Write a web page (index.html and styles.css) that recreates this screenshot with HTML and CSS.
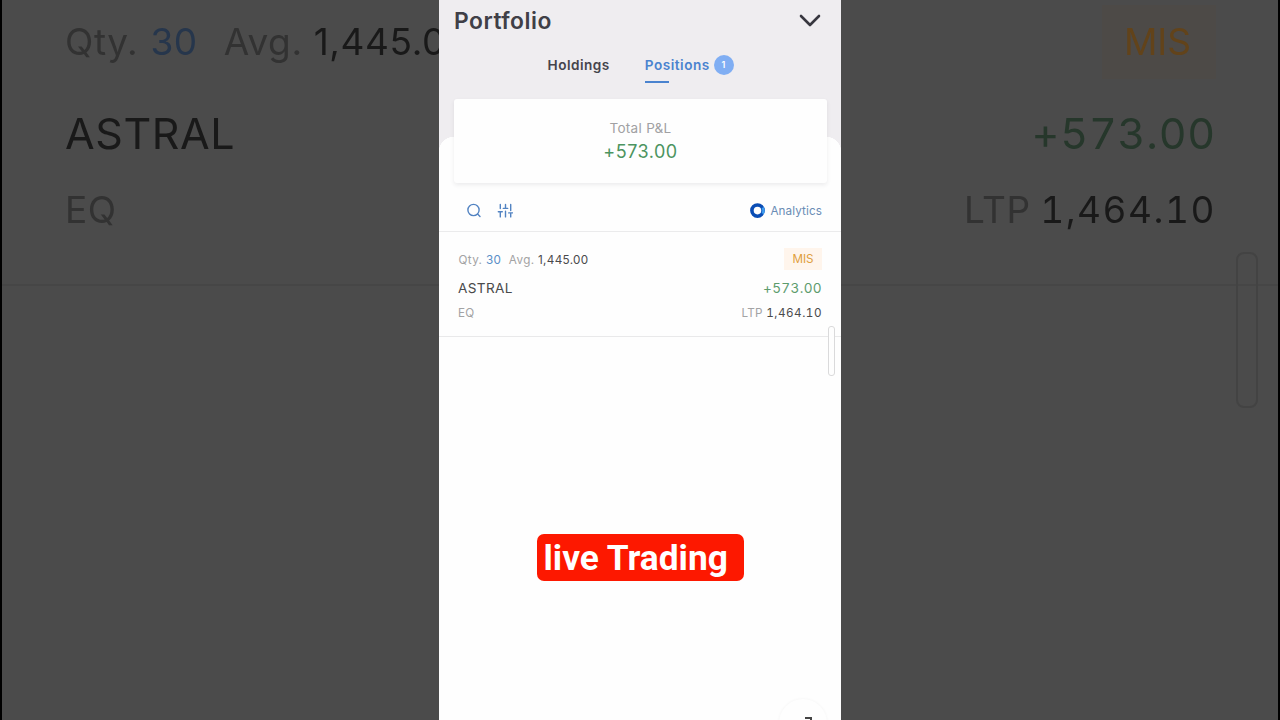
FILE: index.html
```html
<!DOCTYPE html>
<html lang="en">

<head>
  <meta charset="utf-8">
  <title>Portfolio</title>
  <link rel="stylesheet" href="styles.css">
</head>

<body>
  <div class="stage">
    <div class="side side-left">
      <div class="line qty"><span class="muted">Qty.</span> <span class="blue">30</span> <span class="muted avg">Avg.</span> <span class="dark">1,445.00</span></div>
      <div class="line symbol">ASTRAL</div>
      <div class="line exchange muted">EQ</div>
    </div>

    <div class="phone">
      <div class="header">
        <div class="title">
          <h1>Portfolio</h1>
          <svg class="chevron" width="22" height="14" viewBox="0 0 22 14"><path d="M2 2 L11 11 L20 2" /></svg>
        </div>
        <div class="tabs">
          <div class="tab">Holdings</div>
          <div class="tab active">Positions <span class="count">1</span></div>
        </div>
      </div>

      <div class="sheet">
        <div class="total">
          <div class="total-label">Total P&amp;L</div>
          <div class="total-value">+573.00</div>
        </div>

        <div class="tools">
          <svg class="icon search" width="16" height="16" viewBox="0 0 16 16"><circle cx="7.5" cy="7" r="5.6" /><path d="M11.6 11.1 L14 13.5" /></svg>
          <svg class="icon filter" width="16" height="16" viewBox="0 0 16 16"><path d="M3.3 1.5V5.5 M3.3 8.9V13.9 M1.3 8.7H5.3 M8.5 1.5V5.2 M8.5 8.2V13.9 M6.3 5.4H10.7 M13.7 1.5V7.5 M13.7 10.2V13.9 M11.7 9.9H15.7" /></svg>
          <svg class="ring" width="16" height="16" viewBox="0 0 16 16"><circle cx="8.5" cy="7.6" r="5.6" stroke="#0a4db5" /><path d="M13.6 4.6 A6 6 0 0 1 13.6 10.6" stroke="#3d9df0" stroke-width="2.4" /></svg>
          <span class="analytics">Analytics</span>
        </div>

        <div class="position">
          <div class="row row-top">
            <div class="qty"><span class="muted">Qty.</span> <span class="blue">30</span> <span class="muted avg">Avg.</span> <span class="dark">1,445.00</span></div>
            <div class="product">MIS</div>
          </div>
          <div class="row row-main">
            <div class="symbol">ASTRAL</div>
            <div class="pnl">+573.00</div>
          </div>
          <div class="row row-bottom">
            <div class="exchange muted">EQ</div>
            <div class="ltp"><span class="muted">LTP</span> <span class="dark">1,464.10</span></div>
          </div>
        </div>
      </div>

      <div class="handle"></div>
      <div class="caption">live Trading</div>
      <div class="fab"><svg width="8" height="8" viewBox="0 0 8 8"><path d="M1 1H7V7" /></svg></div>
    </div>

    <div class="side side-right">
      <div class="line product"><span>MIS</span></div>
      <div class="line pnl">+573.00</div>
      <div class="line ltp"><span class="muted">LTP</span> <span class="dark">1,464.10</span></div>
      <div class="handle"></div>
    </div>
  </div>
</body>

</html>
```
FILE: styles.css
```css
body {
  margin: 0;
  font-family: Inter, sans-serif;
  background: #000;
}

.stage {
  display: flex;
  width: 1280px;
  height: 720px;
  overflow: hidden;
}

/* phone screen */

.phone {
  position: relative;
  width: 402px;
  height: 720px;
  flex: none;
  overflow: hidden;
  background: #efedf0;
}

.header {
  height: 99px;
}

.title {
  display: flex;
  justify-content: space-between;
  align-items: center;
  height: 42px;
  padding: 0 20px 0 15px;
}

h1 {
  margin: 0;
  font-size: 22.8px;
  font-weight: 600;
  line-height: 42px;
  letter-spacing: 0.5px;
  color: #403f47;
}

.chevron path {
  fill: none;
  stroke: #38373f;
  stroke-width: 2.6;
  stroke-linecap: round;
  stroke-linejoin: round;
}

.tabs {
  display: flex;
  gap: 35px;
  padding-left: 108.5px;
  font-size: 13.6px;
  font-weight: 600;
  line-height: 46px;
  letter-spacing: 0.5px;
  color: #45444c;
}

.tab {
  display: flex;
  align-items: center;
  height: 46px;
}

.tab.active {
  position: relative;
  color: #4a83cf;
}

.tab.active::after {
  content: "";
  position: absolute;
  left: 0;
  bottom: 5px;
  width: 24px;
  height: 2px;
  background: #4a83cf;
}

.count {
  width: 20px;
  height: 20px;
  margin-left: 4px;
  border-radius: 50%;
  background: #80aef3;
  color: #fff;
  font-size: 9px;
  line-height: 20px;
  text-align: center;
}

.sheet {
  height: 621px;
  background: radial-gradient(circle at 15px 53px, #fefefe 15px, transparent 15.5px) 0 0 / 15px 53px no-repeat,
    radial-gradient(circle at 0 53px, #fefefe 15px, transparent 15.5px) 100% 0 / 15px 53px no-repeat,
    linear-gradient(#fefefe, #fefefe) 0 53px no-repeat;
}

.total {
  box-sizing: border-box;
  height: 84px;
  margin: 0 14px 0 15px;
  padding-top: 18px;
  border-radius: 3px;
  background: #fefefe;
  box-shadow: 0 2px 4px rgba(60, 50, 70, 0.09);
  text-align: center;
}

.total-label {
  font-size: 13.5px;
  line-height: 22px;
  letter-spacing: 0.3px;
  color: #a1a1a3;
}

.total-value {
  font-size: 18px;
  line-height: 26px;
  letter-spacing: 0.5px;
  color: #4c9460;
}

.tools {
  box-sizing: border-box;
  display: flex;
  align-items: center;
  height: 49px;
  padding: 7px 19px 0 27px;
  border-bottom: 1px solid #ebebec;
}

.icon {
  fill: none;
  stroke: #5283c2;
  stroke-width: 1.4;
  stroke-linecap: round;
}

.filter {
  margin-left: 15px;
}

.ring {
  margin-left: auto;
  fill: none;
  stroke-width: 3.6;
}

.analytics {
  margin-left: 5px;
  font-size: 11.7px;
  letter-spacing: 0.1px;
  color: #6a8cb5;
}

.position {
  box-sizing: border-box;
  height: 105px;
  padding: 14px 19px 0;
  border-bottom: 1px solid #e9e9ea;
}

.row {
  display: flex;
  justify-content: space-between;
  white-space: nowrap;
}

.row-top {
  height: 26px;
  font-size: 11.7px;
  line-height: 28px;
}

.row-main {
  height: 32px;
  font-size: 13.6px;
  line-height: 32px;
  letter-spacing: 0.35px;
}

.row-bottom {
  height: 18px;
  font-size: 11.7px;
  line-height: 18px;
  letter-spacing: 0.3px;
}

.phone .qty {
  margin-left: 0.5px;
  letter-spacing: 0.34px;
}

.avg {
  margin-left: 4px;
}

.muted {
  color: #a3a3a4;
}

.dark,
.symbol {
  color: #4a4a4b;
}

.blue {
  color: #5a8fc8;
}

.pnl,
.ltp {
  font-variant-numeric: tabular-nums;
}

.phone .pnl {
  letter-spacing: 0.35px;
  color: #5d9c6d;
}

.phone .ltp .dark {
  letter-spacing: 0.5px;
}

.phone .product {
  width: 38px;
  height: 22px;
  margin-top: 2px;
  background: #fff5ec;
  color: #e0a03c;
  line-height: 23px;
  text-align: center;
}

.phone .handle {
  position: absolute;
  top: 326px;
  right: 6px;
  box-sizing: border-box;
  width: 7px;
  height: 50px;
  border: 1px solid #dadadb;
  border-radius: 3px;
  background: #fefefe;
}

.caption {
  position: absolute;
  top: 534px;
  left: 98px;
  box-sizing: border-box;
  width: 207px;
  height: 47px;
  padding-left: 6.5px;
  border-radius: 7px;
  background: #fd1800;
  color: #fff;
  font-family: Roboto, sans-serif;
  font-size: 35.3px;
  font-weight: 700;
  line-height: 48px;
  white-space: nowrap;
}

.fab {
  position: absolute;
  top: 699px;
  left: 340px;
  width: 48px;
  height: 48px;
  border-radius: 50%;
  background: #fefefe;
  box-shadow: 0 0 3px rgba(0, 0, 0, 0.05);
}

.fab svg {
  display: block;
  margin: 18px 0 0 25px;
  fill: none;
  stroke: #444;
  stroke-width: 2;
}

/* dimmed, enlarged copy of the position on both sides */

.side {
  position: relative;
  box-sizing: border-box;
  width: 439px;
  height: 720px;
  flex: none;
  overflow: hidden;
  background: linear-gradient(#464646, #464646) 0 284px / 100% 2px no-repeat #4b4b4b;
  white-space: nowrap;
}

.side .line {
  height: 84px;
  font-size: 37px;
  line-height: 84px;
  letter-spacing: 0.6px;
  filter: blur(0.7px);
}

.side-left {
  padding-left: 63px;
  border-left: 2px solid #000;
}

.side-right {
  padding-right: 62px;
  border-right: 2px solid #000;
  text-align: right;
}

.side .symbol,
.side .pnl {
  height: 98px;
  font-size: 43px;
  line-height: 98px;
}

.side .pnl {
  letter-spacing: 0.8px;
  color: #26372b;
}

.side .exchange,
.side .ltp {
  height: 56px;
  line-height: 56px;
}

.side .ltp .dark {
  letter-spacing: 1.5px;
}

.side .ltp .muted {
  margin-right: -1px;
}

.side .muted {
  color: #323232;
}

.side .blue {
  margin-left: 1px;
}

.side .avg {
  margin-left: 15px;
}

.side .dark,
.side .symbol {
  color: #191919;
}

.side .blue {
  color: #26364c;
}

.side .product span {
  display: inline-block;
  height: 74px;
  padding: 0 25px 0 22px;
  background: #4d4a47;
  color: #62431a;
  line-height: 74px;
  letter-spacing: 0;
}

.side .handle {
  position: absolute;
  top: 252px;
  right: 20px;
  box-sizing: border-box;
  width: 22px;
  height: 156px;
  border: 2px solid #434343;
  border-radius: 8px;
  filter: blur(0.5px);
}
```
